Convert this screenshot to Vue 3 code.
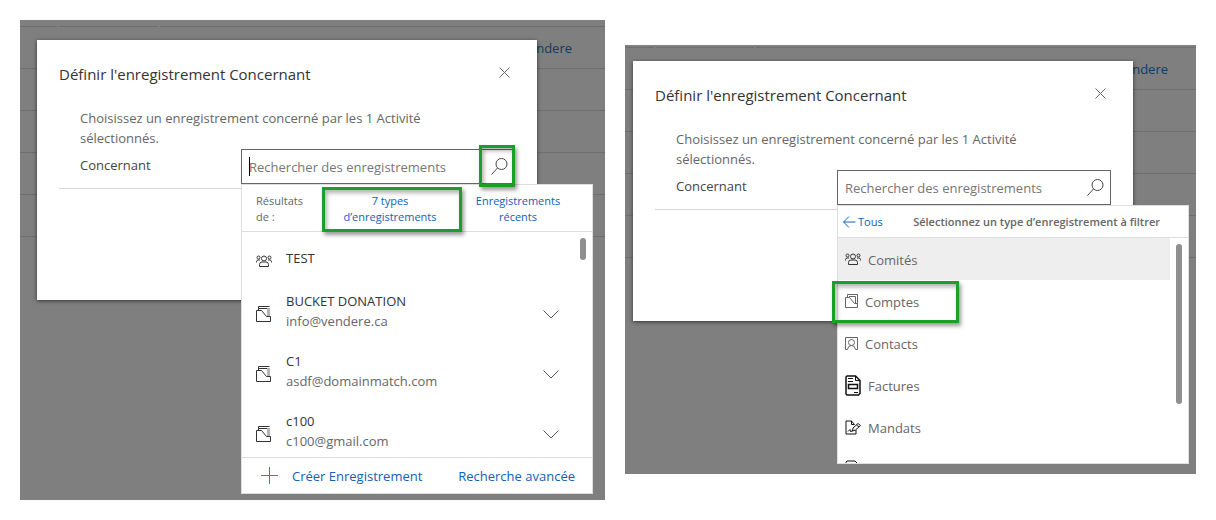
<script setup>
import { ref } from 'vue'

const records = [
  { icon: 'group', name: 'TEST', mail: '' },
  { icon: 'account', name: 'BUCKET DONATION', mail: 'info@vendere.ca' },
  { icon: 'account', name: 'C1', mail: 'asdf@domainmatch.com' },
  { icon: 'account', name: 'c100', mail: 'c100@gmail.com' },
]

const types = [
  { icon: 'group', label: 'Comités', active: true },
  { icon: 'account', label: 'Comptes', marked: true },
  { icon: 'contact', label: 'Contacts' },
  { icon: 'invoice', label: 'Factures' },
  { icon: 'mandate', label: 'Mandats' },
]

const panels = [
  { id: 'results', results: true },
  { id: 'types', results: false },
]

const query = ref('')
</script>

<template>
  <main class="page">
    <section v-for="panel in panels" :key="panel.id" class="stage" :class="panel.id">
      <div class="backdrop">
        <div class="row head"><span></span><span></span><span></span></div>
        <div class="row"><a href="#" class="behind">ndere</a></div>
        <div class="row"></div>
        <div class="row"></div>
        <div class="row"></div>
        <div class="row"></div>
      </div>

      <div class="dialog" role="dialog" :aria-labelledby="panel.id + '-title'">
        <header class="dialog-head">
          <h2 :id="panel.id + '-title'">Définir l'enregistrement Concernant</h2>
          <button type="button" class="close" aria-label="Fermer">
            <svg width="11" height="11" viewBox="0 0 11 11"><path d="M.5 .5l10 10M10.500 .5l-10 10" /></svg>
          </button>
        </header>
        <p class="intro">Choisissez un enregistrement concerné par les 1 Activité sélectionnés.</p>

        <div class="form-row">
          <label :for="panel.id + '-search'">Concernant</label>
          <div class="field">
            <input :id="panel.id + '-search'" v-model="query" type="text" placeholder="Rechercher des enregistrements" />
            <i v-if="panel.results" class="caret"></i>
            <button type="button" class="search" :class="{ marked: panel.results }" aria-label="Rechercher">
              <svg width="17" height="17" viewBox="0 0 17 17"><circle cx="10.500" cy="6" r="5.500" /><path d="M6.500 10L.5 16.500" /></svg>
            </button>

            <div v-if="panel.results" class="menu">
              <div class="menu-head">
                <span class="from">Résultats de :</span>
                <button type="button" class="marked">7 types d’enregistrements</button>
                <button type="button">Enregistrements récents</button>
              </div>
              <div class="scroll">
                <ul class="records">
                  <li v-for="r in records" :key="r.name" :class="{ single: !r.mail }">
                    <span class="glyph">
                      <svg v-if="r.icon === 'group'" class="dark" width="16" height="13" viewBox="0 0 16 13">
                        <circle cx="2.500" cy="2.500" r="1.500" /><circle cx="13.500" cy="2.500" r="1.500" /><circle cx="8" cy="3.500" r="2.500" />
                        <path d="M.5 7.500V6.500Q.5 5 2.500 5H4M15.500 7.500V6.500Q15.500 5 13.500 5H12M3.500 11.500V9.500Q3.500 7 6 7H10Q12.500 7 12.500 9.500V11.500Z" />
                      </svg>
                      <svg v-else class="dark" width="16" height="16" viewBox="0 0 16 16">
                        <path class="pale" d="M11 2H14V10H11Z" />
                        <path d="M.5 15.500V4.500H5.500L10.500 10.500H14.500V15.500ZM2.500 4.500V.5H13.500M3 2.500H11" />
                      </svg>
                    </span>
                    <span class="text"><b>{{ r.name }}</b><small v-if="r.mail">{{ r.mail }}</small></span>
                    <button v-if="r.mail" type="button" class="expand" aria-label="Afficher plus">
                      <svg width="16" height="9" viewBox="0 0 16 9"><path d="M.5 .5L8 8L15.500 .5" /></svg>
                    </button>
                  </li>
                </ul>
                <i class="thumb"></i>
              </div>
              <footer class="menu-foot">
                <button type="button" class="create">
                  <svg width="17" height="17" viewBox="0 0 17 17"><path d="M8.500 0V17M0 8.500H17" /></svg>
                  Créer Enregistrement
                </button>
                <button type="button">Recherche avancée</button>
              </footer>
            </div>

            <div v-else class="menu">
              <div class="filter-head">
                <button type="button">
                  <svg width="13" height="12" viewBox="0 0 13 12"><path d="M6 .5L.5 6L6 11.500M.5 6H12.500" /></svg>Tous
                </button>
                <strong>Sélectionnez un type d’enregistrement à filtrer</strong>
              </div>
              <div class="scroll">
                <ul class="types">
                  <li v-for="t in types" :key="t.label">
                    <button type="button" :class="{ active: t.active, marked: t.marked }">
                      <svg v-if="t.icon === 'group'" class="dark" width="16" height="13" viewBox="0 0 16 13">
                        <circle cx="2.500" cy="2.500" r="1.500" /><circle cx="13.500" cy="2.500" r="1.500" /><circle cx="8" cy="3.500" r="2.500" />
                        <path d="M.5 7.500V6.500Q.5 5 2.500 5H4M15.500 7.500V6.500Q15.500 5 13.500 5H12M3.500 11.500V9.500Q3.500 7 6 7H10Q12.500 7 12.500 9.500V11.500Z" />
                      </svg>
                      <svg v-else-if="t.icon === 'account'" width="13" height="14" viewBox="0 0 13 14">
                        <path d="M2.500 3.500V.5H12.500V13.500H.5V3.500H4.500L9.500 9.500H12M4 2.500H10.500V9" />
                      </svg>
                      <svg v-else-if="t.icon === 'contact'" width="13" height="13" viewBox="0 0 13 13">
                        <path d="M2.500 12.500H.5V.5H12.500V12.500H10.500M2.500 12.500Q3 8.500 6.500 8.500T10.500 12.500" /><circle cx="6.500" cy="5.500" r="3" />
                      </svg>
                      <svg v-else-if="t.icon === 'invoice'" class="bold" width="16" height="21" viewBox="0 0 16 21">
                        <path d="M2 1H10.500L15 5.500V18.500L13.500 20H2L1 19V2ZM3.500 9.500H12.500V13.500H3.500Z" />
                        <path class="thin" d="M10.500 1V5.500H15M3 3.500H8M3 6.500H8M9 17.500H13" />
                      </svg>
                      <svg v-else class="bold thin" width="16" height="15" viewBox="0 0 16 15">
                        <path d="M9.500 4.500L6.500 1H1V14H11V10M6.500 1V4.500H9.500M8 8L13 3.500L15.500 5.500L10.500 10L7.500 11ZM11.500 5L14 7M3 11.500L5 9.500L5.500 11.500L7.500 11" />
                      </svg>
                      <span>{{ t.label }}</span>
                    </button>
                  </li>
                  <li class="clipped">
                    <svg class="bold thin" width="13" height="15" viewBox="0 0 13 15"><path d="M1 14V2L2 1H10L12 3V14Z" /></svg>
                  </li>
                </ul>
                <i class="thumb long"></i>
              </div>
            </div>
          </div>
        </div>
      </div>
    </section>
  </main>
</template>

<style>
body {
  background: #fff;
}
</style>

<style scoped>
* {
  box-sizing: border-box;
}
.page {
  display: flex;
  align-items: flex-start;
  gap: 20px;
  padding: 20px;
  font-family: 'Open Sans', 'Noto Sans', sans-serif;
  font-size: 13px;
  line-height: 20px;
  color: #666;
}
.stage {
  display: grid;
  align-items: start;
  flex: 585 1 0;
  min-width: 0;
  min-height: 480px;
  background: #7f7f7f;
}
.stage.types {
  flex-grow: 571;
  min-height: 429px;
  margin-top: 25px;
}
.backdrop,
.dialog {
  grid-area: 1 / 1;
}
.row {
  display: flex;
  align-items: center;
  justify-content: flex-end;
  height: 42px;
  padding-right: 33px;
  border-bottom: 1px solid #6e6e6e;
}
.types .row {
  padding-right: 28px;
}
.stage .head {
  display: grid;
  grid-template-columns: 37px 99px 1fr;
  column-gap: 2px;
  height: 7px;
  padding: 0;
  border: 0;
}
.types .head {
  grid-template-columns: 29px 98px 1fr;
  height: 3px;
}
.head span {
  height: 100%;
  border-bottom: 1px solid #6e6e6e;
}
.behind {
  color: #0b3c66;
  text-decoration: none;
}
.dialog {
  min-height: 260px;
  margin: 20px 68px 0 17px;
  padding: 0 22px;
  background: #fff;
  box-shadow: 0 1px 4px rgba(0, 0, 0, 0.6);
}
.types .dialog {
  margin: 16px 63px 0 8px;
}
.dialog-head {
  display: flex;
  align-items: center;
  justify-content: space-between;
  height: 68px;
}
h2 {
  margin: 0;
  font-size: 15px;
  font-weight: 400;
  color: #333;
}
button {
  padding: 0;
  border: 0;
  background: none;
  font: inherit;
  color: #1160b7;
}
svg {
  display: block;
  flex: none;
  fill: none;
  stroke: #666;
  stroke-width: 1;
}
.close {
  margin: 0 5px 4px 0;
}
.intro {
  margin: 0;
  padding: 0 80px 0 21px;
}
.form-row {
  display: flex;
  justify-content: space-between;
  height: 41px;
  padding: 1px 0 4px 21px;
  border-bottom: 1px solid #d6d6d6;
}
label {
  padding-top: 6px;
  color: #444;
}
.field {
  position: relative;
  display: flex;
  width: 274px;
  height: 35px;
  border: 1px solid #666;
  background: #fff;
}
input {
  flex: 1;
  min-width: 0;
  padding: 0 0 0 7px;
  border: 0;
  outline: 0;
  background: none;
  font: inherit;
  color: #333;
}
input::placeholder {
  color: #767676;
  opacity: 1;
}
.caret {
  position: absolute;
  left: 7px;
  top: 7px;
  width: 1px;
  height: 19px;
  background: #000;
}
.search {
  display: grid;
  place-items: center;
  width: 30px;
}
.search svg {
  stroke: #444;
}
.marked {
  position: relative;
}
.marked::after {
  content: '';
  position: absolute;
  z-index: 3;
  border: 3px solid #1c9e2b;
  box-shadow: 2px 3px 4px rgba(0, 0, 0, 0.4), inset 2px 3px 4px rgba(0, 0, 0, 0.3);
  pointer-events: none;
}
.search.marked::after {
  inset: -5px -1px -4px -5px;
}
.menu-head .marked::after {
  inset: 2px -8px -1px -4px;
}
.types .marked::after {
  inset: 1px 211px -1px -6px;
}
.menu {
  position: absolute;
  z-index: 2;
  top: 34px;
  left: -1px;
  width: 352px;
  border: 1px solid #dedede;
  background: #fff;
}
.menu-head {
  display: grid;
  grid-template-columns: 84px 1fr 1fr;
  height: 47px;
  padding-right: 10px;
  border-bottom: 1px solid #dedede;
  font-size: 11px;
  line-height: 16px;
}
.from {
  padding: 8px 16px 0 14px;
}
.menu-head button {
  padding: 2px 12px 0;
}
.scroll {
  position: relative;
  overflow-x: visible;
  overflow-y: clip;
}
ul {
  margin: 0;
  padding: 0;
  list-style: none;
}
.records {
  height: 225px;
  padding-top: 6px;
}
.records li {
  display: flex;
  align-items: center;
  height: 60px;
  padding: 0 33px 0 14px;
}
.records .single {
  height: 43px;
  padding-bottom: 3px;
}
.glyph {
  width: 30px;
  padding-top: 6px;
}
.text {
  flex: 1;
}
.text b,
.text small {
  display: block;
  font-size: 13px;
  font-weight: 400;
}
.text b {
  color: #333;
}
.expand {
  padding-top: 6px;
}
.expand svg {
  stroke: #555;
}
svg.dark {
  stroke: #333;
}
.pale {
  fill: #b5b5b5;
  stroke: none;
}
svg.bold {
  stroke: #111;
  stroke-width: 1.5;
}
.bold .thin,
svg.bold.thin {
  stroke-width: 1;
}
.thumb {
  position: absolute;
  top: 6px;
  right: 6px;
  width: 6px;
  height: 22px;
  border-radius: 3px;
  background: #8f8f8f;
}
.thumb.long {
  height: 160px;
}
.menu-foot {
  display: flex;
  align-items: center;
  justify-content: space-between;
  height: 36px;
  padding: 0 17px 0 19px;
  border-top: 1px solid #dedede;
}
.create {
  display: flex;
  align-items: center;
  gap: 14px;
}
.create svg {
  stroke: #5570cc;
}
.filter-head {
  display: flex;
  align-items: center;
  justify-content: space-between;
  height: 32px;
  padding: 0 28px 0 5px;
  border-bottom: 1px solid #dedede;
  font-size: 11px;
}
.filter-head button {
  display: flex;
  align-items: center;
  gap: 2px;
}
.filter-head svg {
  stroke: #1160b7;
}
.filter-head strong {
  font-weight: 600;
}
ul.types {
  height: 225px;
  padding-right: 18px;
}
.types li button {
  display: flex;
  align-items: center;
  gap: 7px;
  width: 100%;
  height: 42px;
  padding-left: 7px;
  color: #666;
}
.types li button span {
  padding-top: 2px;
}
.types li .active {
  background: #eee;
}
.types .clipped {
  padding: 12px 0 0 7px;
}
</style>
